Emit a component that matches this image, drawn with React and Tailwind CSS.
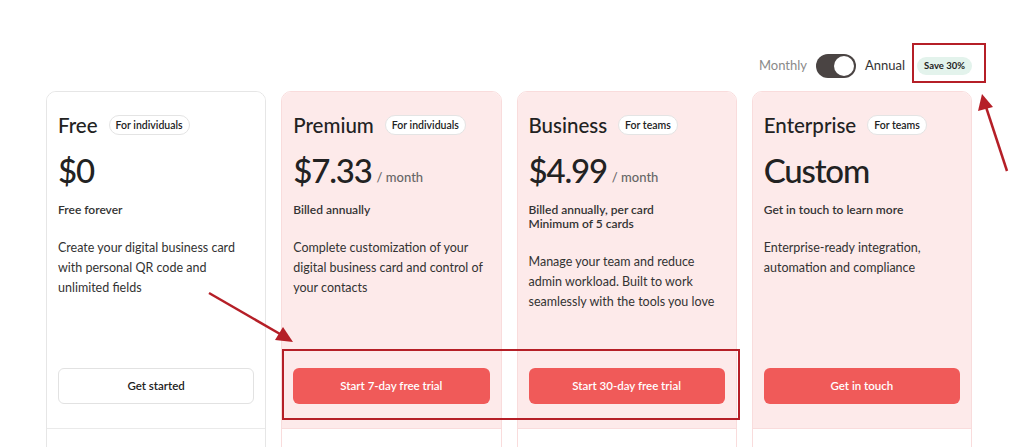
import React from "react";

const plans = [
  {
    name: "Free",
    tag: "For individuals",
    price: "$0",
    per: null,
    billing: ["Free forever"],
    desc: "Create your digital business card with personal QR code and unlimited fields",
    cta: "Get started",
    pink: false,
  },
  {
    name: "Premium",
    tag: "For individuals",
    price: "$7.33",
    per: "/ month",
    billing: ["Billed annually"],
    desc: "Complete customization of your digital business card and control of your contacts",
    cta: "Start 7-day free trial",
    pink: true,
  },
  {
    name: "Business",
    tag: "For teams",
    price: "$4.99",
    per: "/ month",
    billing: ["Billed annually, per card", "Minimum of 5 cards"],
    desc: "Manage your team and reduce admin workload. Built to work seamlessly with the tools you love",
    cta: "Start 30-day free trial",
    pink: true,
  },
  {
    name: "Enterprise",
    tag: "For teams",
    price: "Custom",
    per: null,
    billing: ["Get in touch to learn more"],
    desc: "Enterprise-ready integration, automation and compliance",
    cta: "Get in touch",
    pink: true,
  },
];

function Card({ p }) {
  return (
    <div
      className={`rounded-t-[10px] border ${
        p.pink ? "border-[#f9dcdc]" : "border-[#e6e6e6]"
      } bg-white overflow-hidden`}
    >
      <div
        className={`flex h-[336px] flex-col px-[11px] pt-[21px] pb-[24px] ${
          p.pink ? "bg-[#fdeaea]" : "bg-white"
        }`}
      >
        <div className="flex h-[24px] items-center gap-[11px]">
          <span className="text-[20.5px] font-medium leading-[24px] text-[#222]">{p.name}</span>
          <span className="rounded-full border border-[#e4e4e4] bg-white px-[6px] py-[2.5px] text-[10.5px] font-semibold leading-[13px] text-[#222]">
            {p.tag}
          </span>
        </div>
        <div className="mt-[13px] flex h-[40px] items-end">
          <span className="text-[33px] font-medium leading-[40px] tracking-[-1.2px] text-[#222]">{p.price}</span>
          {p.per && (
            <span className="mb-[5px] ml-[5px] text-[13px] font-medium leading-[16px] text-[#666]">{p.per}</span>
          )}
        </div>
        <div className="mt-[13px] text-[12px] font-semibold leading-[14px] text-[#333]">
          {p.billing.map((b) => (
            <div key={b}>{b}</div>
          ))}
        </div>
        <p className="mt-[21px] text-[12.5px] leading-[20px] text-[#333]">{p.desc}</p>
        <button
          className={`mt-auto h-[36px] w-full rounded-[6px] text-[11.5px] font-semibold ${
            p.pink
              ? "bg-[#f05a59] text-white"
              : "border border-[#e2e2e2] bg-white text-[#222]"
          }`}
        >
          {p.cta}
        </button>
      </div>
      <div className={`h-[40px] border-t ${p.pink ? "border-[#f9dcdc]" : "border-[#eaeaea]"}`} />
    </div>
  );
}

export default function App() {
  return (
    <div
      className="relative h-[447px] w-[1024px] overflow-hidden bg-white"
      style={{ fontFamily: "Lato, 'Open Sans', sans-serif" }}
    >
      <div className="ml-[46px] w-[926px] pt-[54px]">
        <div className="flex h-[24px] items-center justify-end gap-[9px]">
          <span className="text-[13px] text-[#8a8a8a]">Monthly</span>
          <span className="relative inline-block h-[24px] w-[40px] rounded-full bg-[#4a4443]">
            <span className="absolute right-[2px] top-[2px] h-[20px] w-[20px] rounded-full bg-white" />
          </span>
          <span className="text-[13px] text-[#333]">Annual</span>
          <span className="ml-[3px] rounded-full bg-[#e3f3ec] px-[7px] py-[3px] text-[9.5px] font-bold leading-[12px] text-[#222]">
            Save 30%
          </span>
        </div>
        <div className="mt-[13px] grid grid-cols-4 gap-[15px]">
          {plans.map((p) => (
            <Card key={p.name} p={p} />
          ))}
        </div>
      </div>

      {/* annotations */}
      <div className="pointer-events-none absolute left-[282px] top-[349px] h-[71px] w-[458px] border-2 border-[#b51f27]" />
      <div className="pointer-events-none absolute left-[912px] top-[43px] h-[40px] w-[74px] border-2 border-[#b51f27]" />
      <svg className="pointer-events-none absolute left-0 top-0" width="1024" height="447">
        <line x1="209" y1="293" x2="280" y2="334" stroke="#b51f27" strokeWidth="2.5" />
        <polygon points="293,342 275,340 283,327" fill="#b51f27" />
        <line x1="1007" y1="171" x2="986" y2="107" stroke="#b51f27" strokeWidth="2.5" />
        <polygon points="982,94 978,111 993,107" fill="#b51f27" />
      </svg>
    </div>
  );
}
